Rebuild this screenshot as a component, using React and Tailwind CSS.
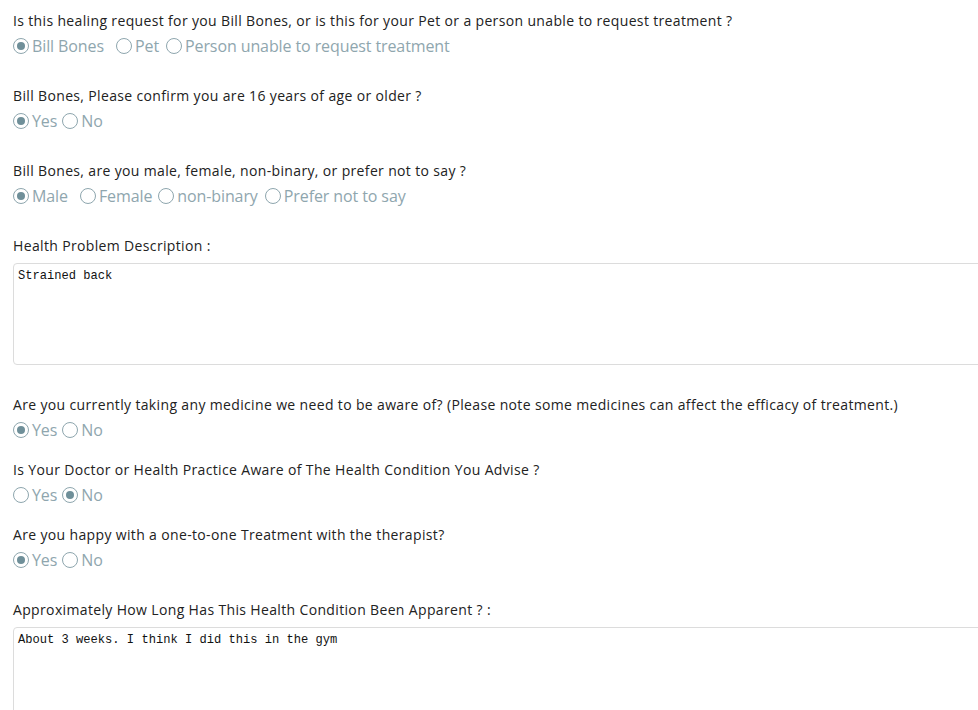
import { useState } from "react";

const font = { fontFamily: '"Open Sans", "Noto Sans", sans-serif' };

const Radio = ({ checked, label, className = "" }) => (
  <label className={`flex items-center gap-[3px] ${className}`}>
    <span className="w-4 h-4 rounded-full border border-[#8ea6ae] flex items-center justify-center shrink-0">
      {checked && <span className="w-2 h-2 rounded-full bg-[#6f8f99]" />}
    </span>
    <span className="text-[16px] text-[#8fa6ae] tracking-[-0.1px]">{label}</span>
  </label>
);

const Question = ({ label, options, value, gaps }) => (
  <div>
    <p className="text-[14px] text-[#222] leading-5 tracking-[0.35px] pt-px -mb-px">{label}</p>
    <div className="flex items-center mt-[6px] h-5">
      {options.map((o, i) => (
        <Radio key={o} label={o} checked={o === value} className={gaps ? gaps[i] : "mr-[5px]"} />
      ))}
    </div>
  </div>
);

const TextBox = ({ label, value, height }) => (
  <div>
    <p className="text-[14px] text-[#222] leading-5 tracking-[0.35px] pt-px -mb-px">{label}</p>
    <textarea
      readOnly
      value={value}
      className={`mt-[8px] w-[1000px] ${height} border border-[#dcdcdc] rounded-[4px] px-[4px] py-[3px] text-[12.1px] text-[#111] resize-none outline-none block`}
      style={{ fontFamily: '"Liberation Mono", monospace' }}
    />
  </div>
);

export default function App() {
  const [who] = useState("Bill Bones");

  return (
    <div className="w-[978px] h-[710px] overflow-hidden bg-white pl-[13px] pt-[10px]" style={font}>
      <Question
        label="Is this healing request for you Bill Bones, or is this for your Pet or a person unable to request treatment ?"
        options={["Bill Bones", "Pet", "Person unable to request treatment"]}
        value={who}
        gaps={["mr-[12px]", "mr-[7px]", ""]}
      />
      <div className="mt-[29px]">
        <Question label="Bill Bones, Please confirm you are 16 years of age or older ?" options={["Yes", "No"]} value="Yes" />
      </div>
      <div className="mt-[29px]">
        <Question
          label="Bill Bones, are you male, female, non-binary, or prefer not to say ?"
          options={["Male", "Female", "non-binary", "Prefer not to say"]}
          value="Male"
          gaps={["mr-[12px]", "mr-[6px]", "mr-[7px]", ""]}
        />
      </div>
      <div className="mt-[29px]">
        <TextBox label="Health Problem Description :" value="Strained back" height="h-[102px]" />
      </div>
      <div className="mt-[29px]">
        <Question
          label="Are you currently taking any medicine we need to be aware of? (Please note some medicines can affect the efficacy of treatment.)"
          options={["Yes", "No"]}
          value="Yes"
        />
      </div>
      <div className="mt-[19px]">
        <Question label="Is Your Doctor or Health Practice Aware of The Health Condition You Advise ?" options={["Yes", "No"]} value="No" />
      </div>
      <div className="mt-[19px]">
        <Question label="Are you happy with a one-to-one Treatment with the therapist?" options={["Yes", "No"]} value="Yes" />
      </div>
      <div className="mt-[29px]">
        <TextBox label="Approximately How Long Has This Health Condition Been Apparent ? :" value="About 3 weeks. I think I did this in the gym" height="h-[102px]" />
      </div>
    </div>
  );
}
